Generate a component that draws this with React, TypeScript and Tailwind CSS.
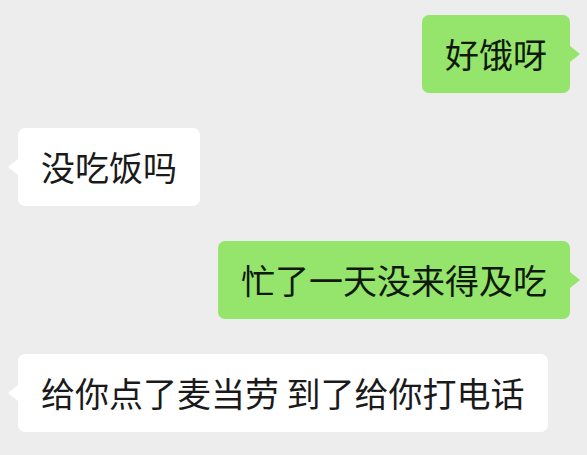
const messages: { text: string; mine: boolean }[] = [
  { text: '好饿呀', mine: true },
  { text: '没吃饭吗', mine: false },
  { text: '忙了一天没来得及吃', mine: true },
  { text: '给你点了麦当劳 到了给你打电话', mine: false },
];

function Bubble({ text, mine }: { text: string; mine: boolean }) {
  return (
    <div
      className={`relative rounded-[7px] px-[23px] py-[20px] text-[34px] leading-[38px] whitespace-nowrap ${
        mine ? 'bg-[#95e46c] text-[#0f1a0c]' : 'bg-white text-[#1a1a1a]'
      }`}
    >
      {text}
      {mine ? (
        <span className="absolute right-[-10px] top-1/2 -translate-y-1/2 h-0 w-0 border-y-[8px] border-l-[10px] border-y-transparent border-l-[#95e46c]" />
      ) : (
        <span className="absolute left-[-10px] top-1/2 -translate-y-1/2 h-0 w-0 border-y-[8px] border-r-[10px] border-y-transparent border-r-white" />
      )}
    </div>
  );
}

export default function App() {
  return (
    <div
      className="h-[455px] w-[587px] overflow-hidden bg-[#ededed] pt-[15px] pl-[18px] pr-[17px] flex flex-col gap-[35px]"
      style={{ fontFamily: '"Noto Sans CJK SC", "Noto Sans", sans-serif' }}
    >
      {messages.map((m, i) => (
        <div key={i} className={`flex ${m.mine ? 'justify-end' : 'justify-start'}`}>
          <Bubble text={m.text} mine={m.mine} />
        </div>
      ))}
    </div>
  );
}
